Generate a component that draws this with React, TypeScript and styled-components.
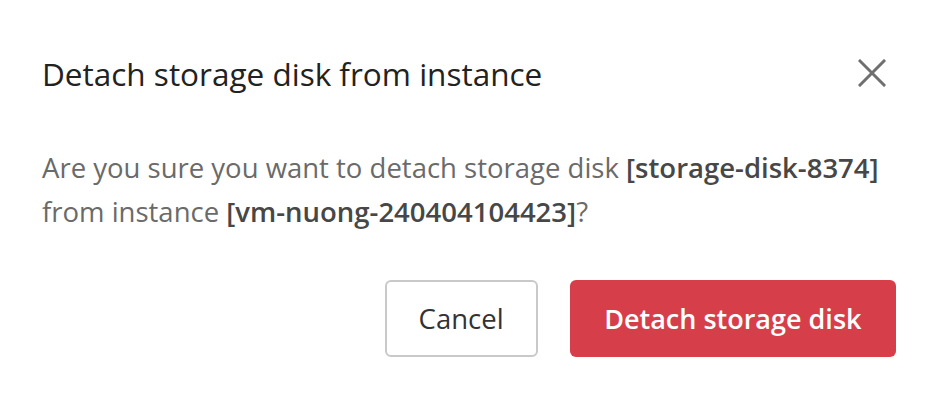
import React from "react";
import styled, { createGlobalStyle } from "styled-components";

const Global = createGlobalStyle`
  html, body { margin: 0; padding: 0; background: #ffffff; }
  body { font-family: "Open Sans", "Noto Sans", sans-serif; }
`;

const Dialog = styled.div`
  width: 940px;
  height: 398px;
  box-sizing: border-box;
  padding: 49px 44px 0 42px;
  display: flex;
  flex-direction: column;
  background: #fff;
`;

const Header = styled.div`
  display: flex;
  align-items: center;
  justify-content: space-between;
  height: 48px;
`;

const Title = styled.h2`
  margin: 0;
  font-size: 31.5px;
  font-weight: 400;
  color: #222;
  letter-spacing: 0;
  white-space: nowrap;
`;

const CloseButton = styled.button`
  border: none;
  background: none;
  padding: 0;
  margin-right: 8px;
  width: 32px;
  height: 32px;
  display: flex;
  align-items: center;
  justify-content: center;
  cursor: pointer;
`;

const Message = styled.p`
  margin: 49px 0 0 0;
  font-size: 27.5px;
  line-height: 44px;
  color: #6a6a6a;
  white-space: nowrap;
`;

const Strong = styled.b`
  font-weight: 600;
  color: #474747;
`;

const Actions = styled.div`
  display: flex;
  justify-content: flex-end;
  gap: 32px;
  margin-top: 46px;
`;

const Button = styled.button<{ $primary?: boolean }>`
  height: 77px;
  box-sizing: border-box;
  border-radius: 6px;
  font-family: "Open Sans", "Noto Sans", sans-serif;
  font-size: ${(p) => (p.$primary ? "27px" : "27.5px")};
  padding: 0 ${(p) => (p.$primary ? "34.5px" : "32px")};
  font-weight: ${(p) => (p.$primary ? 600 : 400)};
  color: ${(p) => (p.$primary ? "#fff" : "#333")};
  background: ${(p) => (p.$primary ? "#d63f49" : "#fff")};
  border: ${(p) => (p.$primary ? "none" : "2px solid #c9c9c9")};
  cursor: pointer;
`;

export default function App() {
  return (
    <>
      <Global />
      <Dialog>
        <Header>
          <Title>Detach storage disk from instance</Title>
          <CloseButton aria-label="Close">
            <svg width="28" height="28" viewBox="0 0 28 28">
              <path d="M2 2 L26 26 M26 2 L2 26" stroke="#6f6f6f" strokeWidth="3" strokeLinecap="square" />
            </svg>
          </CloseButton>
        </Header>
        <Message>
          Are you sure you want to detach storage disk <Strong>[storage-disk-8374]</Strong>
          <br />
          from instance <Strong>[vm-nuong-240404104423]</Strong>?
        </Message>
        <Actions>
          <Button>Cancel</Button>
          <Button $primary>Detach storage disk</Button>
        </Actions>
      </Dialog>
    </>
  );
}
